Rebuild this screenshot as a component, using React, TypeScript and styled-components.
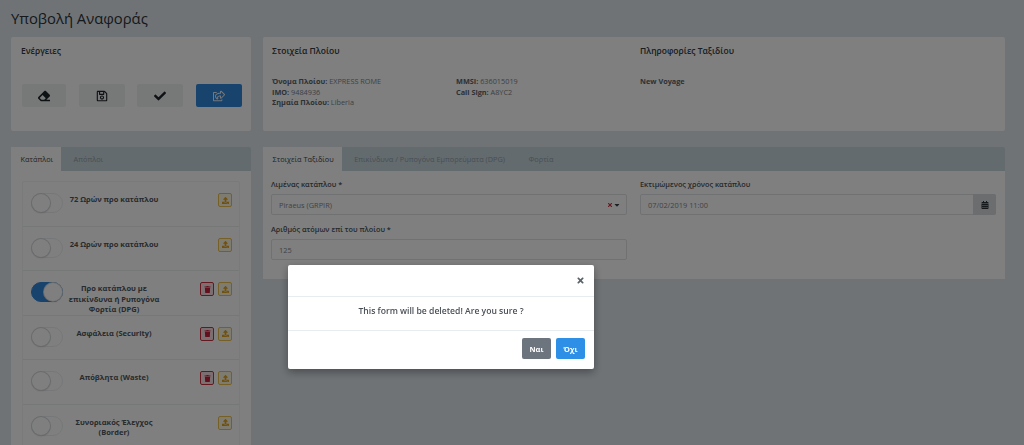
import React from "react";
import styled, { createGlobalStyle } from "styled-components";
import { FaEraser, FaRegSave, FaCheck, FaRegShareSquare, FaCalendarAlt, FaTrash, FaUpload, FaTimes, FaCaretDown } from "react-icons/fa";

const Global = createGlobalStyle`
  html, body { margin: 0; padding: 0; height: 445px; overflow: hidden; background: #dfe6ec; }
  body { font-family: "Open Sans", "Liberation Sans", sans-serif; color: #3a4248; }
  * { box-sizing: border-box; }
`;

const Page = styled.div`
  width: 1024px;
  height: 445px;
  padding: 8px 19px 0 11px;
  overflow: hidden;
`;
const Title = styled.h1`
  margin: 0 0 8px;
  font-size: 14.8px;
  line-height: 21px;
  font-weight: 400;
  color: #2d3338;
`;
const Grid = styled.div`
  display: grid;
  grid-template-columns: 240px 742px;
  column-gap: 12px;
  row-gap: 16px;
  align-items: start;
`;
const Card = styled.section<{ $wideInset?: boolean }>`
  background: #fff;
  height: 94px;
  border-radius: 2px;
  padding: 8px 9px 9px ${(p) => (p.$wideInset ? 10 : 9)}px;
`;
const CardTitle = styled.h2`
  margin: 0;
  font-size: 8.5px;
  line-height: 12px;
  font-weight: 600;
  color: #333a40;
`;
const Actions = styled.div`
  display: grid;
  grid-template-columns: 44px 46px 46px 46px;
  justify-content: space-between;
  margin: 27px 0 0 1px;
`;
const ActionButton = styled.button<{ $primary?: boolean }>`
  height: 23px;
  border: 0;
  border-radius: 2px;
  padding: 0;
  display: flex;
  align-items: center;
  justify-content: center;
  background: ${(p) => (p.$primary ? "#2f86d8" : "#eff0f1")};
  color: ${(p) => (p.$primary ? "#e8f1fa" : "#1f2529")};
  font-size: 12px;
`;
const InfoColumns = styled.div`
  display: grid;
  grid-template-columns: 368px 1fr;
`;
const InfoDetails = styled.div`
  display: grid;
  grid-template-columns: 184px 1fr;
  margin-top: 19px;
`;
const InfoLine = styled.div`
  font-size: 7.3px;
  line-height: 10.5px;
  color: #7b8389;
  strong { font-weight: 700; color: #5b6369; }
`;
const TabBar = styled.div`
  display: flex;
  height: 24px;
  background: #c9d6dc;
  border-radius: 2px 2px 0 0;
`;
const Tab = styled.div<{ $active?: boolean }>`
  display: flex;
  align-items: center;
  padding: 0 8px 0 ${(p) => (p.$active ? 9.5 : 12.5)}px;
  margin-right: ${(p) => (p.$active ? 0 : 3)}px;
  font-size: 7.35px;
  background: ${(p) => (p.$active ? "#fff" : "transparent")};
  color: ${(p) => (p.$active ? "#3f474d" : "#8fa0a8")};
`;
const LeftBody = styled.div`
  background: #fff;
  padding: 10px 11px 0;
  height: 300px;
`;
const ReportList = styled.div`
  border: 1px solid #f2f4f5;
  border-radius: 2px;
`;
const Report = styled.div`
  display: grid;
  grid-template-columns: 32px 92px 1fr;
  column-gap: 5px;
  height: 44.6px;
  padding: 11px 7px 0 8px;
  border-bottom: 1px solid #eceeef;
`;
const Toggle = styled.div<{ $on?: boolean }>`
  position: relative;
  width: 32px;
  height: 20px;
  border-radius: 10px;
  background: ${(p) => (p.$on ? "#2f86d8" : "#fff")};
  border: 1px solid ${(p) => (p.$on ? "#2f86d8" : "#eceef0")};
  &::after {
    content: "";
    position: absolute;
    top: 0;
    left: ${(p) => (p.$on ? 12 : 0)}px;
    width: 18px;
    height: 18px;
    border-radius: 50%;
    background: #fff;
    box-shadow: 0 0 0 1px #d4d7da, 0 1px 2px rgba(0, 0, 0, 0.2);
  }
`;
const ReportLabel = styled.div`
  font-size: 7.5px;
  line-height: 10.4px;
  font-weight: 700;
  text-align: center;
  color: #4e565c;
  padding-top: 1px;
`;
const ReportActions = styled.div`
  display: flex;
  justify-content: flex-end;
  gap: 4px;
`;
const SquareButton = styled.div<{ $tone: "red" | "yellow" }>`
  width: 14px;
  height: 14px;
  border-radius: 2px;
  display: flex;
  align-items: center;
  justify-content: center;
  font-size: 7px;
  background: ${(p) => (p.$tone === "red" ? "#f7dfe2" : "#fdf6e2")};
  border: 1px solid ${(p) => (p.$tone === "red" ? "#c9303f" : "#eec04a")};
  color: ${(p) => (p.$tone === "red" ? "#c4213a" : "#e0a21c")};
`;
const FormBody = styled.div`
  background: #fff;
  height: 108px;
  padding: 8px 9px 0 8px;
  display: grid;
  grid-template-columns: 356px 356px;
  column-gap: 13px;
  row-gap: 9px;
  align-content: start;
`;
const Field = styled.div``;
const FieldLabel = styled.label`
  display: block;
  font-size: 7.3px;
  line-height: 11px;
  font-weight: 600;
  color: #4a5258;
  margin-bottom: 4px;
`;
const InputBox = styled.div`
  display: flex;
  align-items: center;
  height: 21px;
  border: 1px solid #e0e3e6;
  border-radius: 2px;
  font-size: 7.4px;
  color: #7f878d;
  padding-left: 7px;
`;
const InputValue = styled.span`
  flex: 1;
`;
const ClearMark = styled.span`
  display: flex;
  font-size: 6px;
  color: #c9303f;
`;
const CaretMark = styled.span`
  display: flex;
  font-size: 8px;
  color: #3a4248;
  margin-right: 5px;
`;
const CalendarAddon = styled.span`
  width: 23px;
  height: 21px;
  margin: -1px -1px -1px 0;
  display: flex;
  align-items: center;
  justify-content: center;
  background: #d6dbdf;
  color: #2d3338;
  font-size: 8px;
  border-radius: 0 2px 2px 0;
`;
const Backdrop = styled.div`
  position: fixed;
  inset: 0;
  background: rgba(0, 0, 0, 0.5);
`;
const Modal = styled.div`
  position: fixed;
  left: 288px;
  top: 265px;
  width: 306px;
  height: 104px;
  background: #fff;
  border-radius: 2px;
  box-shadow: 0 3px 8px rgba(0, 0, 0, 0.35);
  display: flex;
  flex-direction: column;
`;
const ModalHeader = styled.div`
  height: 32px;
  display: flex;
  justify-content: flex-end;
  align-items: center;
  padding: 0 9px 0 0;
  border-bottom: 1px solid #e9ecef;
  font-size: 9px;
  color: #5a6268;
`;
const ModalBody = styled.div`
  height: 34px;
  display: flex;
  align-items: center;
  justify-content: center;
  padding-bottom: 6px;
  border-bottom: 1px solid #e9ecef;
  font-size: 8.6px;
  font-weight: 600;
  color: #4a4f55;
`;
const ModalFooter = styled.div`
  flex: 1;
  display: flex;
  justify-content: flex-end;
  align-items: center;
  gap: 5px;
  padding: 0 9px 3px 0;
`;
const ModalButton = styled.button<{ $blue?: boolean }>`
  height: 21px;
  width: 29px;
  border: 0;
  padding: 0;
  border-radius: 2px;
  font-family: inherit;
  font-size: 7.5px;
  font-weight: 700;
  color: #fff;
  background: ${(p) => (p.$blue ? "#2e8fe6" : "#6c757d")};
`;

const reports = [
  { label: "72 Ωρών προ κατάπλου" },
  { label: "24 Ωρών προ κατάπλου" },
  { label: "Προ κατάπλου με επικίνδυνα ή Ρυπογόνα Φορτία (DPG)", on: true, del: true },
  { label: "Ασφάλεια (Security)", del: true },
  { label: "Απόβλητα (Waste)", del: true },
  { label: "Συνοριακός Έλεγχος (Border)" },
];

export default function App() {
  return (
    <Page>
      <Global />
      <Title>Υποβολή Αναφοράς</Title>
      <Grid>
        <Card $wideInset>
          <CardTitle>Ενέργειες</CardTitle>
          <Actions>
            <ActionButton><FaEraser /></ActionButton>
            <ActionButton><FaRegSave /></ActionButton>
            <ActionButton><FaCheck /></ActionButton>
            <ActionButton $primary><FaRegShareSquare /></ActionButton>
          </Actions>
        </Card>
        <Card>
          <InfoColumns>
            <div>
              <CardTitle>Στοιχεία Πλοίου</CardTitle>
              <InfoDetails>
                <div>
                  <InfoLine><strong>Όνομα Πλοίου:</strong> EXPRESS ROME</InfoLine>
                  <InfoLine><strong>IMO:</strong> 9484936</InfoLine>
                  <InfoLine><strong>Σημαία Πλοίου:</strong> Liberia</InfoLine>
                </div>
                <div>
                  <InfoLine><strong>MMSI:</strong> 636015019</InfoLine>
                  <InfoLine><strong>Call Sign:</strong> A8YC2</InfoLine>
                </div>
              </InfoDetails>
            </div>
            <div>
              <CardTitle>Πληροφορίες Ταξιδίου</CardTitle>
              <InfoDetails>
                <InfoLine><strong>New Voyage</strong></InfoLine>
              </InfoDetails>
            </div>
          </InfoColumns>
        </Card>
        <div>
          <TabBar>
            <Tab $active>Κατάπλοι</Tab>
            <Tab>Απόπλοι</Tab>
          </TabBar>
          <LeftBody>
            <ReportList>
              {reports.map((r) => (
                <Report key={r.label}>
                  <Toggle $on={r.on} />
                  <ReportLabel>{r.label}</ReportLabel>
                  <ReportActions>
                    {r.del && <SquareButton $tone="red"><FaTrash /></SquareButton>}
                    <SquareButton $tone="yellow"><FaUpload /></SquareButton>
                  </ReportActions>
                </Report>
              ))}
            </ReportList>
          </LeftBody>
        </div>
        <div>
          <TabBar>
            <Tab $active>Στοιχεία Ταξιδίου</Tab>
            <Tab>Επικίνδυνα / Ρυπογόνα Εμπορεύματα (DPG)</Tab>
            <Tab>Φορτία</Tab>
          </TabBar>
          <FormBody>
            <Field>
              <FieldLabel>Λιμένας κατάπλου *</FieldLabel>
              <InputBox>
                <InputValue>Piraeus (GRPIR)</InputValue>
                <ClearMark><FaTimes /></ClearMark>
                <CaretMark><FaCaretDown /></CaretMark>
              </InputBox>
            </Field>
            <Field>
              <FieldLabel>Εκτιμώμενος χρόνος κατάπλου</FieldLabel>
              <InputBox>
                <InputValue>07/02/2019 11:00</InputValue>
                <CalendarAddon><FaCalendarAlt /></CalendarAddon>
              </InputBox>
            </Field>
            <Field>
              <FieldLabel>Αριθμός ατόμων επί του πλοίου *</FieldLabel>
              <InputBox><InputValue>125</InputValue></InputBox>
            </Field>
          </FormBody>
        </div>
      </Grid>
      <Backdrop />
      <Modal>
        <ModalHeader><FaTimes /></ModalHeader>
        <ModalBody>This form will be deleted! Are you sure ?</ModalBody>
        <ModalFooter>
          <ModalButton>Ναι</ModalButton>
          <ModalButton $blue>Όχι</ModalButton>
        </ModalFooter>
      </Modal>
    </Page>
  );
}
